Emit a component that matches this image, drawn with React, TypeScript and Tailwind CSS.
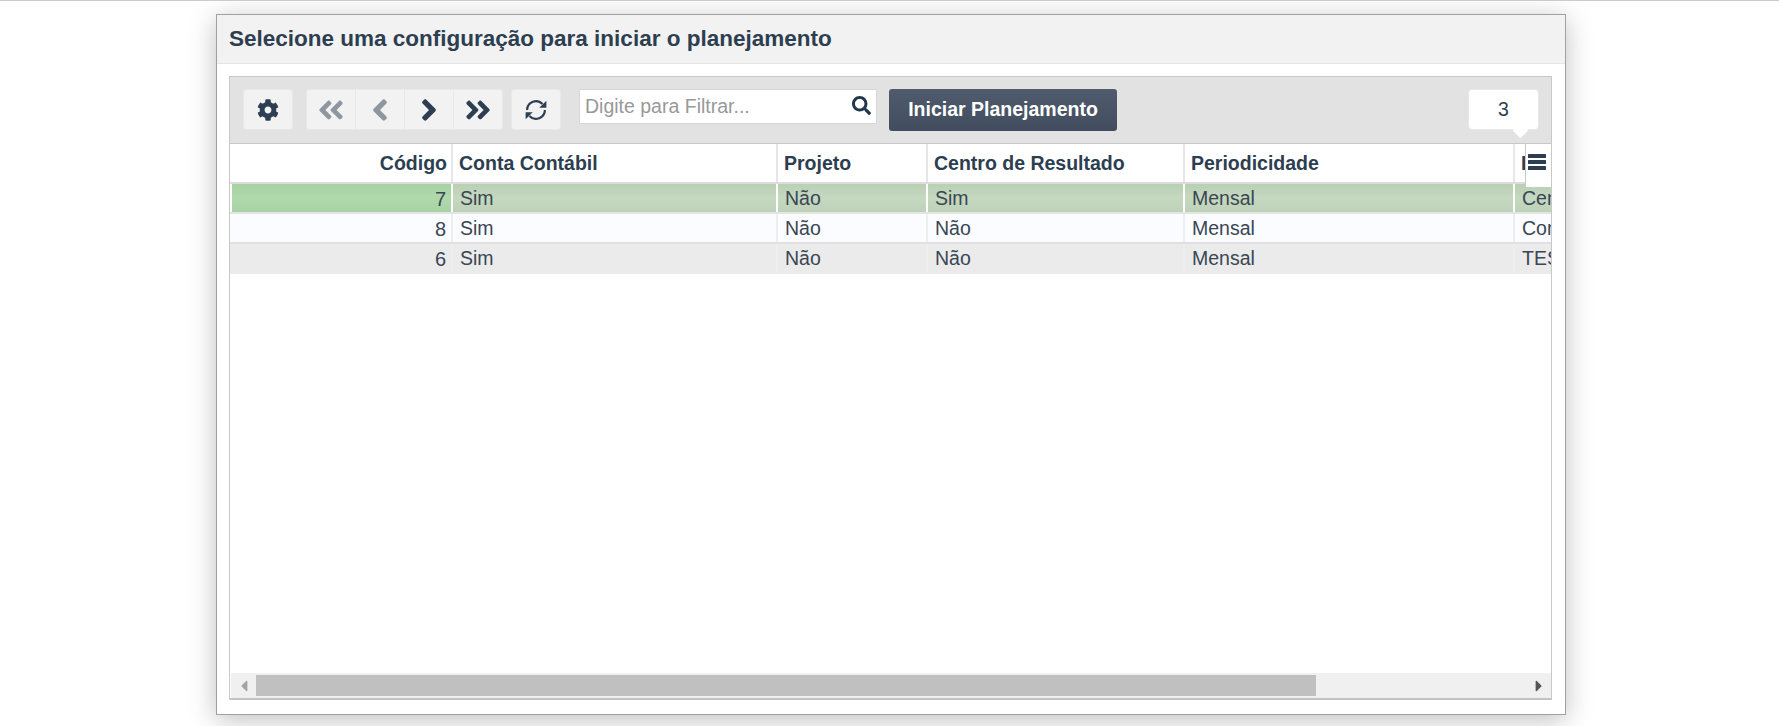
import React from "react";
import { FaCog, FaAngleDoubleLeft, FaAngleLeft, FaAngleRight, FaAngleDoubleRight, FaSearch, FaCaretLeft, FaCaretRight } from "react-icons/fa";

const columns = [
    { label: "Código", width: "w-[223px]", right: true },
    { label: "Conta Contábil", width: "w-[325px]" },
    { label: "Projeto", width: "w-[150px]" },
    { label: "Centro de Resultado", width: "w-[257px]" },
    { label: "Periodicidade", width: "w-[330px]" },
    { label: "Identificação", width: "w-[100px]" },
];

const rows = [
    { cells: ["7", "Sim", "Não", "Sim", "Mensal", "Centro"], bg: "bg-gradient-to-b from-[#b9d0b4] via-[#c5d8c0] to-[#bcd2b7]", first: "bg-gradient-to-b from-[#a6d2a1] via-[#b0d8ac] to-[#a8d3a3]", line: "border-[#e4e4e4]", selected: true },
    { cells: ["8", "Sim", "Não", "Não", "Mensal", "Contas"], bg: "bg-[#fbfcff]", first: "bg-[#fbfcff]", line: "border-[#e0e0e0]" },
    { cells: ["6", "Sim", "Não", "Não", "Mensal", "TESTE"], bg: "bg-[#ebebeb]", first: "bg-[#ebebeb]", line: "border-[#ebebeb]" },
];

const toolBtn = "h-[41px] flex items-center justify-center bg-[#f2f2f2] border border-[#e8e8e8] text-[#2c3e50]";

function RefreshIcon() {
    return (
        <svg width="24" height="24" viewBox="0 0 22 22" fill="none">
            <path d="M2.8 11a8.2 8.2 0 0 1 14.2-5.4" stroke="#2c3e50" strokeWidth="2" />
            <path d="M19.2 11a8.2 8.2 0 0 1-14.2 5.4" stroke="#2c3e50" strokeWidth="2" />
            <path d="M20.5 2.5v6.5H14z" fill="#2c3e50" />
            <path d="M1.5 19.5V13H8z" fill="#2c3e50" />
        </svg>
    );
}

export default function App() {
    return (
        <div className="h-[726px] overflow-hidden bg-white border-t border-[#cccccc] font-['Liberation_Sans',Arial,sans-serif] text-[#2c3e50]">
            <div className="ml-[216px] mt-[13px] w-[1350px] h-[701px] flex flex-col bg-white border border-[#a0a0a0] shadow-[0_5px_25px_rgba(0,0,0,0.25)]">
                <div className="h-[49px] shrink-0 flex items-center px-3 bg-[#f2f2f2] border-b border-[#e5e5e5]">
                    <h2 className="text-[22.5px] font-bold">Selecione uma configuração para iniciar o planejamento</h2>
                </div>
                <div className="flex-1 pl-3 pr-[13px] pt-3 pb-[14px] flex flex-col min-h-0">
                    <div className="flex-1 flex flex-col min-h-0 border border-[#c8c8c8] border-b-2 border-b-[#c0c4c8] relative overflow-hidden">
                        <div className="h-[67px] shrink-0 bg-[#e2e2e2] border-b border-[#c8c8c8] pl-[13px] pr-[12px] flex items-start pt-3">
                            <button className={`${toolBtn} w-[50px] rounded-[3px] text-[22px]`}><FaCog /></button>
                            <div className="ml-[13px] flex">
                                <button className={`${toolBtn} w-[50px] rounded-l-[3px] text-[#8e96a0] text-[30px]`}><FaAngleDoubleLeft /></button>
                                <button className={`${toolBtn} w-[50px] -ml-px text-[#8e96a0] text-[34px]`}><FaAngleLeft /></button>
                                <button className={`${toolBtn} w-[50px] -ml-px text-[34px]`}><FaAngleRight /></button>
                                <button className={`${toolBtn} w-[50px] -ml-px rounded-r-[3px] text-[30px]`}><FaAngleDoubleRight /></button>
                            </div>
                            <button className={`${toolBtn} w-[50px] ml-2 rounded-[3px]`}><RefreshIcon /></button>
                            <div className="ml-[18px] w-[298px] h-[35px] flex items-center justify-between bg-white border border-[#d8d8d8] pl-[5px] pr-[5px]">
                                <span className="text-[19.5px] text-[#999999]">Digite para Filtrar...</span>
                                <FaSearch className="text-[19px] -mt-[3px] text-[#22364c]" />
                            </div>
                            <button className="ml-3 w-[228px] h-[42px] rounded-[3px] bg-gradient-to-b from-[#505c6e] to-[#414d5e] text-white text-[19.5px] font-bold">Iniciar Planejamento</button>
                            <div className="ml-auto relative w-[71px] h-[41px] bg-white rounded-[4px] border border-[#e8e8e8] flex items-center justify-center text-[19.5px]">
                                3
                                <div className="absolute left-[46px] -bottom-[7px] w-[11px] h-[11px] rotate-45 bg-white"></div>
                            </div>
                        </div>
                        <div className="flex-1 min-h-0 relative overflow-hidden">
                            <div className="flex h-[40px] bg-white border-b-2 border-[#dcdcdc]">
                                {columns.map((c) => (
                                    <div key={c.label} className={`${c.width} shrink-0 h-full flex items-center pl-[6px] pr-1 pt-[2px] text-[19.5px] font-bold border-r-2 border-[#e6e6e6] whitespace-nowrap overflow-hidden ${c.right ? "justify-end" : ""}`}>{c.label}</div>
                                ))}
                            </div>
                            {rows.map((r) => (
                                <div key={r.cells[0]} className={`flex h-[30px] border-b-2 ${r.line} text-[19.5px] text-[#3a4653]`}>
                                    {r.cells.map((cell, i) => (
                                        <div key={i} className={`${columns[i].width} shrink-0 h-full flex items-center pl-[7px] pr-[5px] pt-[2px] border-r-2 ${r.selected ? "border-white" : "border-[#eeeeee]"} whitespace-nowrap overflow-hidden ${i === 0 ? `${r.first} justify-end text-[20px]` : r.bg} ${i === 0 && r.selected ? "border-l-2 border-l-white" : ""}`}>{cell}</div>
                                    ))}
                                </div>
                            ))}
                            <div className="absolute top-0 right-0 w-[26px] h-[43px] bg-white border-l border-[#c8c8c8] pl-[2px] pt-[10px]">
                                <svg width="18" height="16" viewBox="0 0 18 16" fill="#2c3e50">
                                    <rect y="0" width="18" height="4" rx="0.5" />
                                    <rect y="6" width="18" height="4" rx="0.5" />
                                    <rect y="12" width="18" height="4" rx="0.5" />
                                </svg>
                            </div>
                        </div>
                        <div className="h-[25px] shrink-0 ml-[1px] flex items-center bg-[#f0f0f0] text-[#555555]">
                            <div className="w-[25px] flex justify-center text-[#a3a3a3] text-[18px]"><FaCaretLeft /></div>
                            <div className="w-[1060px] h-[21px] bg-[#c0c0c0]"></div>
                            <div className="ml-auto w-[25px] flex justify-center text-[18px]"><FaCaretRight /></div>
                        </div>
                    </div>
                </div>
            </div>
        </div>
    );
}
